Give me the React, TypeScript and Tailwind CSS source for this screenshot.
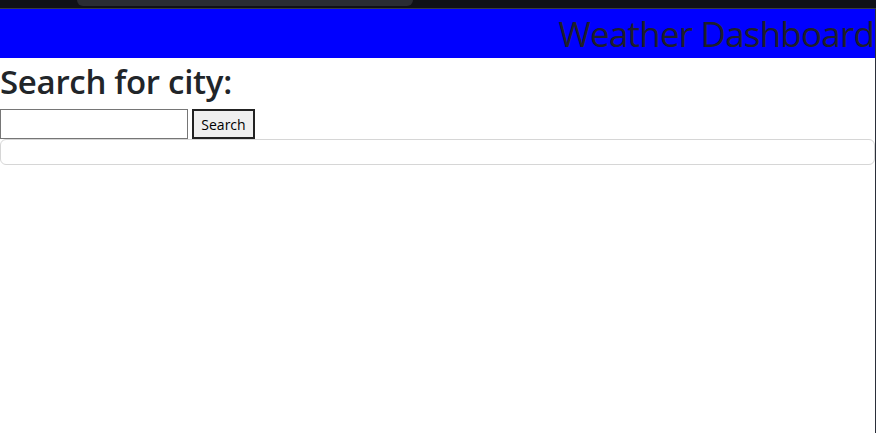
import React from 'react';

export default function App() {
  return (
    <div className="flex h-[433px] w-[876px] flex-col overflow-hidden bg-white font-['Open_Sans',sans-serif] text-[#212529]">
      {/* window chrome strip */}
      <div className="flex h-[9px] shrink-0 items-start border-b border-[#3a3d45] bg-[#101117]">
        <div className="ml-[77px] h-[6px] w-[336px] rounded-b-md bg-[#2a2c33]" />
      </div>
      <div className="flex flex-1 border-r border-[#2b2f3a]">
        <div className="flex-1">
          <header className="flex h-[49px] items-center justify-end bg-[#0000ff] pr-[1px]">
            <h1 className="text-[35px] font-medium leading-none tracking-[-0.8px] text-[#1f1f2a]">Weather Dashboard</h1>
          </header>
          <h2 className="mt-[1px] text-[33px] font-semibold leading-[46px] tracking-[-0.3px]">Search for city:</h2>
          <div className="mt-[4px] flex items-center gap-[4px]">
            <input
              type="text"
              className="h-[30px] w-[188px] border border-[#767676] bg-white px-1 text-[14px] outline-none"
            />
            <button className="h-[30px] w-[63px] border-2 border-[#222] bg-[#efefef] text-[14px] text-black">
              Search
            </button>
          </div>
          <div className="h-[26px] rounded-[6px] border border-[#d6d6d6]" />
        </div>
      </div>
    </div>
  );
}
